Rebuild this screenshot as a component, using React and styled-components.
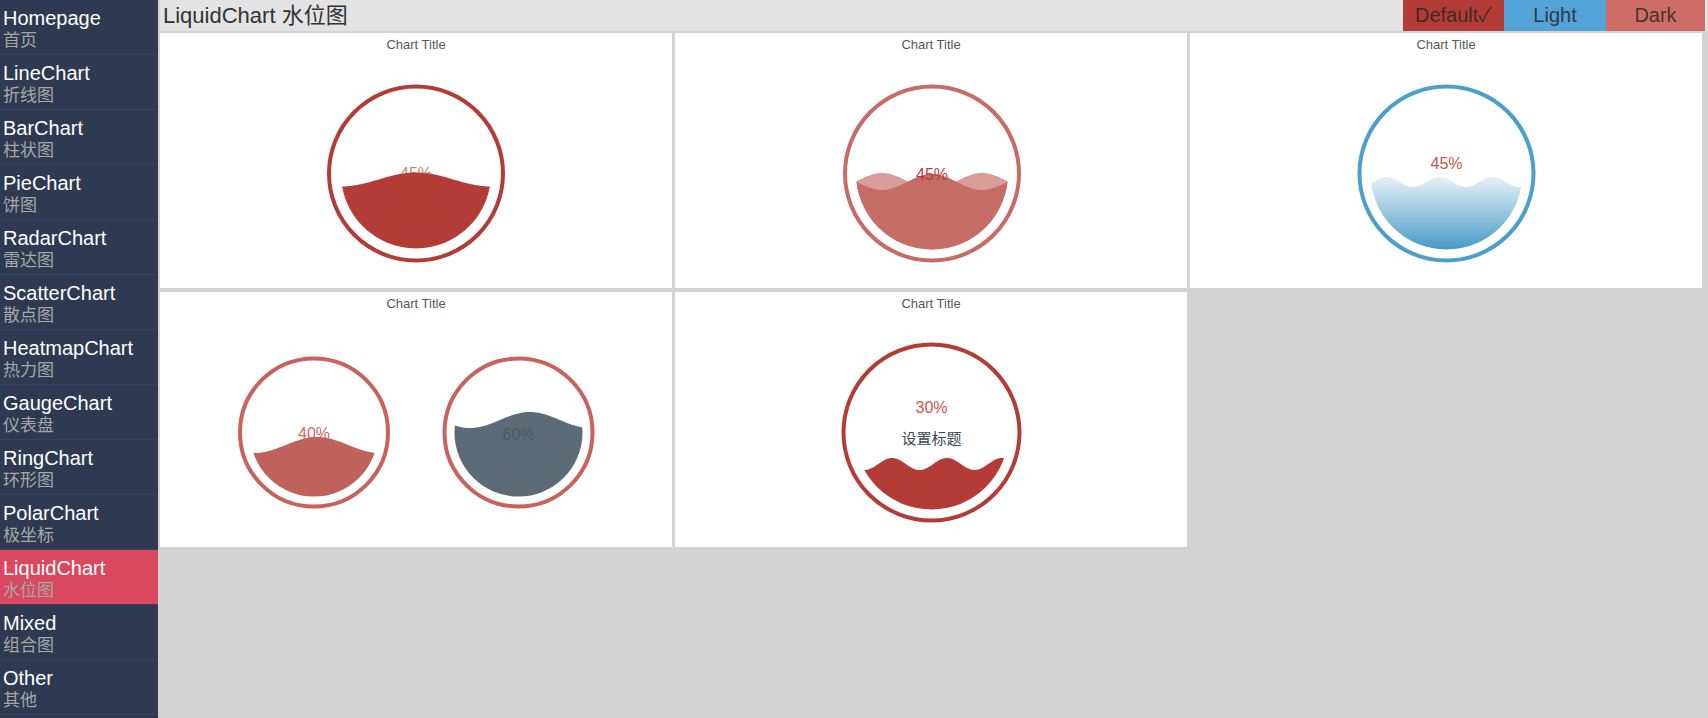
import styled, { createGlobalStyle } from 'styled-components';

const GlobalStyle = createGlobalStyle`
  html, body {
    margin: 0;
    padding: 0;
    height: 100%;
    overflow: hidden;
    font-family: "Liberation Sans", "Noto Sans CJK SC", sans-serif;
  }
  #root {
    height: 100%;
  }
`;

const Layout = styled.div`
  display: flex;
  width: 1708px;
  height: 718px;
`;

const Sidebar = styled.nav`
  flex: 0 0 158px;
  background: #2e3a52;
  display: flex;
  flex-direction: column;
`;

const NavItem = styled.div`
  height: 55px;
  padding: 8px 0 0 3px;
  box-sizing: border-box;
  border-bottom: 1px solid #37445c;
  background: ${(p) => (p.$active ? '#d9485e' : 'transparent')};
  cursor: pointer;
`;

const NavEn = styled.div`
  font-size: 20px;
  line-height: 21px;
  color: #fff;
`;

const NavZh = styled.div`
  font-family: "Noto Sans CJK SC", sans-serif;
  font-size: 17px;
  line-height: 20px;
  color: #a7a7a7;
`;

const Main = styled.main`
  flex: 1;
  background: #d3d3d3;
  padding-left: 2px;
  display: flex;
  flex-direction: column;
`;

const Header = styled.header`
  height: 31px;
  background: #e3e3e3;
  display: flex;
  align-items: stretch;
  justify-content: space-between;
  padding: 0 3px;
`;

const PageTitle = styled.h1`
  margin: 0;
  font-weight: normal;
  font-size: 22px;
  line-height: 31px;
  color: #333;
`;

const ThemeGroup = styled.div`
  display: flex;
`;

const ThemeButton = styled.div`
  width: ${(p) => p.$w}px;
  background: ${(p) => p.$bg};
  color: rgba(40, 40, 40, 0.85);
  font-size: 20px;
  line-height: 31px;
  text-align: center;
  cursor: pointer;
`;

const Grid = styled.section`
  display: grid;
  grid-template-columns: repeat(3, 512px);
  grid-auto-rows: 255px;
  column-gap: 3px;
  row-gap: 4px;
  padding-top: 2px;
`;

const Card = styled.div`
  background: #fff;
  display: flex;
  flex-direction: column;
`;

const CardTitle = styled.div`
  height: 24px;
  line-height: 24px;
  font-size: 13px;
  color: #585858;
  text-align: center;
`;

const ChartSvg = styled.svg`
  display: block;
  flex: 1;
  width: 512px;
`;

const navs = [
  ['Homepage', '首页'],
  ['LineChart', '折线图'],
  ['BarChart', '柱状图'],
  ['PieChart', '饼图'],
  ['RadarChart', '雷达图'],
  ['ScatterChart', '散点图'],
  ['HeatmapChart', '热力图'],
  ['GaugeChart', '仪表盘'],
  ['RingChart', '环形图'],
  ['PolarChart', '极坐标'],
  ['LiquidChart', '水位图'],
  ['Mixed', '组合图'],
  ['Other', '其他'],
];

const CY = 140.5;

const charts = [
  {
    balls: [
      {
        cx: 256, ring: 87, inner: 75, ringColor: '#b33c37',
        waves: [{ fill: '#b33c37', mean: 146.5, amp: 7, lambda: 150, crest: 256 }],
        labels: [{ text: '45%', y: 140, color: '#d57c77', size: 16, under: true }],
      },
    ],
  },
  {
    balls: [
      {
        cx: 257, ring: 87, inner: 76, ringColor: '#c76b65',
        waves: [
          { fill: '#d99d99', mean: 148, amp: 8, lambda: 100, crest: 207 },
          { fill: '#c56c65', mean: 149, amp: 8, lambda: 100, crest: 257 },
        ],
        labels: [{ text: '45%', y: 141, color: '#b33c37', size: 16 }],
      },
    ],
  },
  {
    balls: [
      {
        cx: 256.5, ring: 87, inner: 76, ringColor: '#4ba0cb',
        waves: [{ fill: 'url(#blueFill)', mean: 149, amp: 5, lambda: 53, crest: 196.5 }],
        labels: [{ text: '45%', y: 130, color: '#c9534e', size: 16 }],
      },
    ],
  },
  {
    balls: [
      {
        cx: 154, ring: 74, inner: 64, ringColor: '#c8625b',
        waves: [{ fill: '#c0625b', mean: 153, amp: 8, lambda: 125, crest: 157 }],
        labels: [{ text: '40%', y: 141, color: '#cc6a64', size: 16, under: true }],
      },
      {
        cx: 358.5, ring: 74, inner: 64, ringColor: '#c8625b',
        waves: [{ fill: '#5c6b78', mean: 128, amp: 8, lambda: 120, crest: 370 }],
        labels: [{ text: '60%', y: 142, color: '#4a5865', size: 16 }],
      },
    ],
  },
  {
    balls: [
      {
        cx: 256.5, ring: 88, inner: 77, ringColor: '#b33c37',
        waves: [{ fill: '#b33c37', mean: 172, amp: 6, lambda: 55, crest: 217 }],
        labels: [
          { text: '30%', y: 115, color: '#c9534e', size: 16 },
          { text: '设置标题', y: 146, color: '#3d4a57', size: 15 },
        ],
      },
    ],
  },
];

function wavePath(cx, r, { mean, amp, lambda, crest }) {
  const x0 = cx - r - 4;
  const x1 = cx + r + 4;
  let d = '';
  for (let x = x0; x <= x1; x += 2) {
    const y = mean - amp * Math.cos((2 * Math.PI * (x - crest)) / lambda);
    d += `${d ? 'L' : 'M'}${x.toFixed(1)} ${y.toFixed(1)} `;
  }
  d += `L${x1} ${CY + r + 4} L${x0} ${CY + r + 4} Z`;
  return d;
}

const Label = ({ l, x }) => (
  <text
    x={x}
    y={l.y}
    fill={l.color}
    fontSize={l.size}
    textAnchor="middle"
    dominantBaseline="central"
    fontFamily='"Liberation Sans", "Noto Sans CJK SC", sans-serif'
  >
    {l.text}
  </text>
);

const LiquidBall = ({ ball, id }) => (
  <g>
    <defs>
      <clipPath id={id}>
        <circle cx={ball.cx} cy={CY} r={ball.inner} />
      </clipPath>
    </defs>
    <circle cx={ball.cx} cy={CY} r={ball.ring} fill="none" stroke={ball.ringColor} strokeWidth="4" />
    {ball.labels.filter((l) => l.under).map((l) => (
      <Label key={l.text} l={l} x={ball.cx} />
    ))}
    <g clipPath={`url(#${id})`}>
      {ball.waves.map((w, i) => (
        <path key={i} d={wavePath(ball.cx, ball.inner, w)} fill={w.fill} />
      ))}
    </g>
    {ball.labels.filter((l) => !l.under).map((l) => (
      <Label key={l.text} l={l} x={ball.cx} />
    ))}
  </g>
);

const App = () => (
  <>
    <GlobalStyle />
    <Layout>
      <Sidebar>
        {navs.map(([en, zh]) => (
          <NavItem key={en} $active={en === 'LiquidChart'}>
            <NavEn>{en}</NavEn>
            <NavZh>{zh}</NavZh>
          </NavItem>
        ))}
      </Sidebar>
      <Main>
        <Header>
          <PageTitle>LiquidChart 水位图</PageTitle>
          <ThemeGroup>
            <ThemeButton $bg="#b33c37" $w={101}>Default✓</ThemeButton>
            <ThemeButton $bg="#52a3d7" $w={102}>Light</ThemeButton>
            <ThemeButton $bg="#d06c66" $w={99}>Dark</ThemeButton>
          </ThemeGroup>
        </Header>
        <Grid>
          {charts.map((c, ci) => (
            <Card key={ci}>
              <CardTitle>Chart Title</CardTitle>
              <ChartSvg viewBox="0 24 512 231" height="231">
                <defs>
                  <linearGradient id={`blueFill${ci === 2 ? '' : ci}`} x1="0" y1="0" x2="0" y2="1">
                    <stop offset="0" stopColor="#e6f1f6" />
                    <stop offset="1" stopColor="#3e96c3" />
                  </linearGradient>
                </defs>
                {c.balls.map((b, bi) => (
                  <LiquidBall key={bi} ball={b} id={`clip-${ci}-${bi}`} />
                ))}
              </ChartSvg>
            </Card>
          ))}
        </Grid>
      </Main>
    </Layout>
  </>
);

export default App;
